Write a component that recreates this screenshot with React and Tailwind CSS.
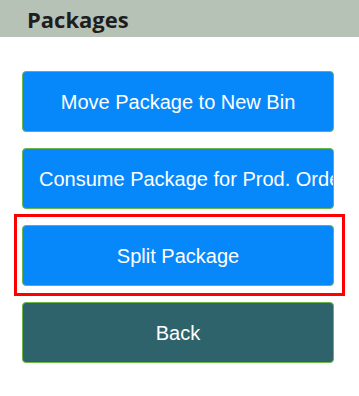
export default function App() {
  const btn =
    "flex h-[61px] w-[312px] items-center justify-center overflow-hidden whitespace-nowrap rounded-[4px] border border-[#6cb64a] px-4 text-[20px] text-white";
  return (
    <div className="h-[396px] w-[359px] bg-white" style={{ fontFamily: '"Liberation Sans", Arial, sans-serif' }}>
      <div className="flex h-[37px] items-center bg-[#b6c2b5] pl-[27px]">
        <h1 className="text-[22px] font-bold leading-none text-[#1e1e1e]" style={{ fontFamily: '"Open Sans", sans-serif' }}>
          Packages
        </h1>
      </div>
      <div className="flex flex-col gap-4 pl-[22px] pt-[34px]">
        <button className={`${btn} bg-[#0788fa]`}>Move Package to New Bin</button>
        <button className={`${btn} justify-start bg-[#0788fa]`}>Consume Package for Prod. Order</button>
        <div className="relative">
          <div className="pointer-events-none absolute -left-[8px] -top-[11px] h-[82px] w-[331px] border-[3px] border-[#ff0000]" />
          <button className={`${btn} bg-[#0788fa]`}>Split Package</button>
        </div>
        <button className={`${btn} bg-[#2e636b]`}>Back</button>
      </div>
    </div>
  );
}
